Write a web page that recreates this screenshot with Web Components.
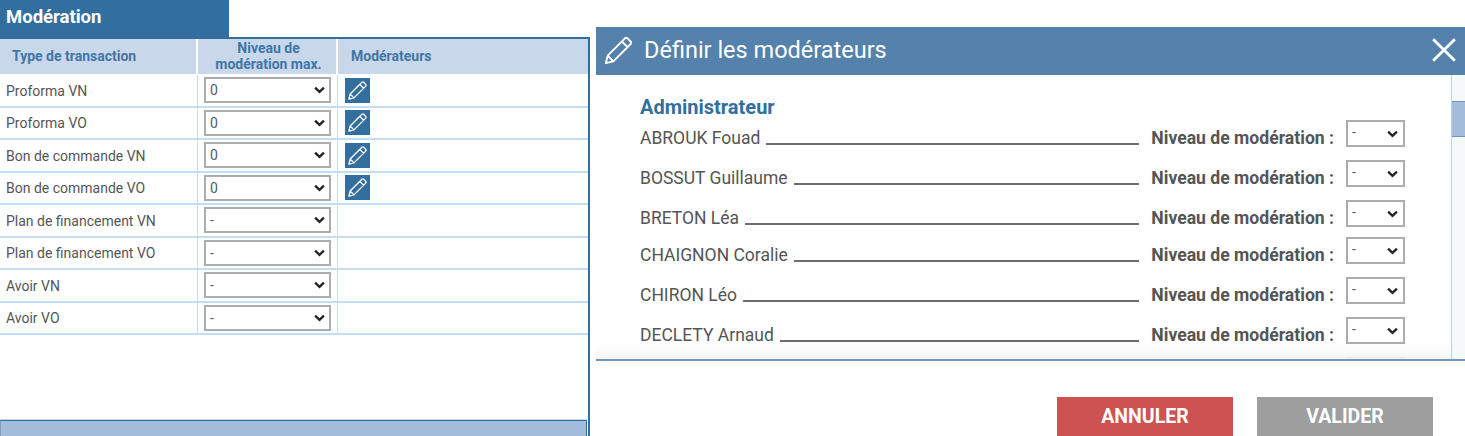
<!DOCTYPE html>
<html lang="fr">
<head>
<meta charset="utf-8">
<title>Modération</title>
<style>
  html, body { margin: 0; height: 100%; overflow: hidden; background: #fff; }
  body { font-family: Roboto, "Liberation Sans", sans-serif; }
  moderation-page { height: 436px; }
</style>
</head>
<body>
<moderation-page>
  <moderation-panel slot="left">
    <transaction-row label="Proforma VN" value="0" editable></transaction-row>
    <transaction-row label="Proforma VO" value="0" editable></transaction-row>
    <transaction-row label="Bon de commande VN" value="0" editable></transaction-row>
    <transaction-row label="Bon de commande VO" value="0" editable></transaction-row>
    <transaction-row label="Plan de financement VN" value="-"></transaction-row>
    <transaction-row label="Plan de financement VO" value="-"></transaction-row>
    <transaction-row label="Avoir VN" value="-"></transaction-row>
    <transaction-row label="Avoir VO" value="-"></transaction-row>
  </moderation-panel>
  <moderator-dialog slot="right">
    <moderator-row>ABROUK Fouad</moderator-row>
    <moderator-row>BOSSUT Guillaume</moderator-row>
    <moderator-row>BRETON Léa</moderator-row>
    <moderator-row short>CHAIGNON Coralie</moderator-row>
    <moderator-row>CHIRON Léo</moderator-row>
    <moderator-row>DECLETY Arnaud</moderator-row>
    <moderator-row></moderator-row>
  </moderator-dialog>
</moderation-page>

<script>
const PENCIL = `<path d="M17 2.6 a1.4 1.4 0 0 1 2 0 l2.4 2.4 a1.4 1.4 0 0 1 0 2 L8 20.4 L2.2 21.8 L3.6 16 Z M14.6 5 L19 9.4 M3.6 16 L8 20.4" fill="none" stroke="currentColor" stroke-width="1.5" stroke-linejoin="round"/>`;
const CHEVRON = `url("data:image/svg+xml,%3Csvg xmlns='http://www.w3.org/2000/svg' viewBox='0 0 12 8'%3E%3Cpath d='M1.2 1.4 6 6 10.8 1.4' fill='none' stroke='%23222' stroke-width='2.5'/%3E%3C/svg%3E")`;

const pageTemplate = document.createElement('template');
pageTemplate.innerHTML = `
  <style>
    :host { display: flex; width: 1465px; overflow: hidden; }
    .left { flex: 0 0 590px; display: flex; }
    .right { flex: 1 0; margin-left: 6px; padding-top: 27px; display: flex; min-width: 0; }
  </style>
  <div class="left"><slot name="left"></slot></div>
  <div class="right"><slot name="right"></slot></div>
`;

class ModerationPage extends HTMLElement {
  constructor() {
    super();
    this.attachShadow({ mode: 'open' });
    this.shadowRoot.appendChild(pageTemplate.content.cloneNode(true));
  }
}

const panelTemplate = document.createElement('template');
panelTemplate.innerHTML = `
  <style>
    :host { display: flex; flex-direction: column; width: 590px; }
    .tab {
      width: 229px; height: 37px; box-sizing: border-box; padding-left: 6px;
      background: #326f9e; color: #fff; font-size: 18.5px; font-weight: 700; line-height: 34px;
    }
    .box {
      flex: 1 0; display: flex; flex-direction: column; min-height: 0;
      border-top: 2px solid #326f9e; border-right: 2px solid #326f9e;
    }
    .head {
      display: grid; grid-template-columns: 198px 140px 1fr; height: 35px;
      background: #c9d7ea; color: #3f76a6; font-size: 14px; font-weight: 700; line-height: 15.5px;
    }
    .head div { display: flex; align-items: center; border-right: 2px solid #fff; box-sizing: border-box; }
    .head div:nth-child(1) { padding-left: 12px; }
    .head div:nth-child(2) { justify-content: center; text-align: center; padding-left: 3px; }
    .head div:nth-child(3) { padding-left: 13px; border-right: 0; }
    .rows { flex: 1 0; padding-top: 1px; }
    .bar {
      height: 15px; background: #a2bcd9; border: 1px solid #326f9e; border-left-color: #7fa0c4;
      border-bottom: 0; box-shadow: 0 -1px 0 #c9d7ea; margin-right: 1px;
    }
  </style>
  <div class="tab">Modération</div>
  <div class="box">
    <div class="head">
      <div>Type de transaction</div>
      <div>Niveau de<br>modération max.</div>
      <div>Modérateurs</div>
    </div>
    <div class="rows"><slot></slot></div>
    <div class="bar"></div>
  </div>
`;

class ModerationPanel extends HTMLElement {
  constructor() {
    super();
    this.attachShadow({ mode: 'open' });
    this.shadowRoot.appendChild(panelTemplate.content.cloneNode(true));
  }
}

const rowTemplate = document.createElement('template');
rowTemplate.innerHTML = `
  <style>
    :host {
      display: grid; grid-template-columns: 198px 140px 1fr; height: 32.5px; box-sizing: border-box;
      border-bottom: 2px solid #c6dcf2; color: #555; font-size: 14px;
    }
    .cell { display: flex; align-items: center; box-sizing: border-box; }
    .label { padding: 1px 0 0 6px; border-right: 1px solid #c6dcf2; }
    .level { padding-left: 6px; border-right: 1px solid #c6dcf2; }
    .action { padding-left: 7px; }
    select {
      appearance: none; width: 127px; height: 26px; box-sizing: border-box; border: 2px solid #adadad; border-radius: 0;
      background: #fff ${CHEVRON} no-repeat right 4px center / 11px 8px;
      color: #5a5a5a; font: 14px Roboto, "Liberation Sans", sans-serif; padding: 0 0 0 4px;
    }
    button {
      width: 25px; height: 25px; padding: 0; border: 0; display: flex; align-items: center; justify-content: center;
      background: #326f9e; color: #fff;
    }
    svg { width: 21px; height: 21px; }
  </style>
  <div class="cell label"></div>
  <div class="cell level"><select></select></div>
  <div class="cell action"></div>
`;

class TransactionRow extends HTMLElement {
  constructor() {
    super();
    this.attachShadow({ mode: 'open' });
    this.shadowRoot.appendChild(rowTemplate.content.cloneNode(true));
    this.shadowRoot.querySelector('.label').textContent = this.getAttribute('label');
    const select = this.shadowRoot.querySelector('select');
    ['-', '0', '1', '2'].forEach((level) => select.add(new Option(level, level)));
    select.value = this.getAttribute('value');
    if (this.hasAttribute('editable')) {
      this.shadowRoot.querySelector('.action').innerHTML = `<button aria-label="Définir les modérateurs"><svg viewBox="0 0 24 24">${PENCIL}</svg></button>`;
    }
  }
}

const dialogTemplate = document.createElement('template');
dialogTemplate.innerHTML = `
  <style>
    :host { display: flex; flex-direction: column; flex: 1 0; min-width: 0; }
    header {
      height: 48px; flex: none; box-sizing: border-box; display: flex; align-items: center; padding: 0 8px 2px 7px;
      background: #5482ac; color: #fff; font-size: 23.5px;
    }
    header .pencil { width: 31px; height: 31px; margin-right: 10px; }
    header h2 { flex: 1 0; margin: 0; font: inherit; }
    header .close { width: 26px; height: 26px; }
    .middle { height: 284px; flex: none; display: flex; border-bottom: 2px solid #6f97ba; }
    .content { flex: 1 0; overflow: hidden; padding: 19px 46px 0 44px; position: relative; }
    .content::after {
      content: ""; position: absolute; left: 0; right: 0; bottom: 0; height: 14px;
      background: linear-gradient(rgba(245,245,245,0), #f5f5f5);
    }
    h3 { margin: 0 0 -10px; color: #326f9e; font-size: 20px; font-weight: 700; line-height: 26px; }
    .scroll { width: 14px; flex: none; box-sizing: border-box; background: #f6f9fc; border-left: 1px solid #bcd2e8; padding-top: 26px; }
    .thumb { height: 36px; background: #a2bcd9; border-top: 1px solid #6f97ba; border-bottom: 1px solid #6f97ba; box-sizing: border-box; }
    footer { flex: 1 0; display: flex; justify-content: flex-end; gap: 24px; padding: 36px 32px 0 0; }
  </style>
  <header>
    <svg class="pencil" viewBox="0 0 24 24">${PENCIL}</svg>
    <h2>Définir les modérateurs</h2>
    <svg class="close" viewBox="0 0 24 24"><path d="M2 2 L22 22 M22 2 L2 22" stroke="currentColor" stroke-width="2.6" fill="none"/></svg>
  </header>
  <div class="middle">
    <div class="content">
      <h3>Administrateur</h3>
      <slot></slot>
    </div>
    <div class="scroll"><div class="thumb"></div></div>
  </div>
  <footer>
    <action-button color="#cd5353">ANNULER</action-button>
    <action-button color="#9e9e9e">VALIDER</action-button>
  </footer>
`;

class ModeratorDialog extends HTMLElement {
  constructor() {
    super();
    this.attachShadow({ mode: 'open' });
    this.shadowRoot.appendChild(dialogTemplate.content.cloneNode(true));
  }
}

const moderatorTemplate = document.createElement('template');
moderatorTemplate.innerHTML = `
  <style>
    :host { display: flex; align-items: flex-end; height: 40px; color: #555; font-size: 17.5px; }
    :host([short]) { height: 37px; }
    .name { line-height: 20px; padding-bottom: 2px; }
    .line { flex: 1 0; border-bottom: 2px solid #6e6e6e; margin: 0 12px 5px 6px; }
    .caption { font-size: 17.6px; font-weight: 700; line-height: 20px; padding-bottom: 2px; margin-right: 12px; }
    select {
      appearance: none; width: 59px; height: 27px; box-sizing: border-box; margin-bottom: 3px; border: 2px solid #adadad; border-radius: 0;
      background: #fff ${CHEVRON} no-repeat right 5px center / 11px 8px;
      color: #5a5a5a; font: 14px Roboto, "Liberation Sans", sans-serif; padding: 0 0 3px 4px;
    }
  </style>
  <span class="name"><slot></slot></span>
  <span class="line"></span>
  <span class="caption">Niveau de modération :</span>
  <select><option>-</option><option>0</option><option>1</option></select>
`;

class ModeratorRow extends HTMLElement {
  constructor() {
    super();
    this.attachShadow({ mode: 'open' });
    this.shadowRoot.appendChild(moderatorTemplate.content.cloneNode(true));
  }
}

const buttonTemplate = document.createElement('template');
buttonTemplate.innerHTML = `
  <style>
    :host { display: block; }
    button {
      width: 176px; height: 40px; border: 0; padding: 0 0 1px; display: block;
      color: #fff; font: 700 19.5px Roboto, "Liberation Sans", sans-serif;
    }
  </style>
  <button><slot></slot></button>
`;

class ActionButton extends HTMLElement {
  constructor() {
    super();
    this.attachShadow({ mode: 'open' });
    this.shadowRoot.appendChild(buttonTemplate.content.cloneNode(true));
    this.shadowRoot.querySelector('button').style.background = this.getAttribute('color');
  }
}

window.customElements.define('action-button', ActionButton);
window.customElements.define('moderation-page', ModerationPage);
window.customElements.define('moderation-panel', ModerationPanel);
window.customElements.define('transaction-row', TransactionRow);
window.customElements.define('moderator-dialog', ModeratorDialog);
window.customElements.define('moderator-row', ModeratorRow);
</script>
</body>
</html>
